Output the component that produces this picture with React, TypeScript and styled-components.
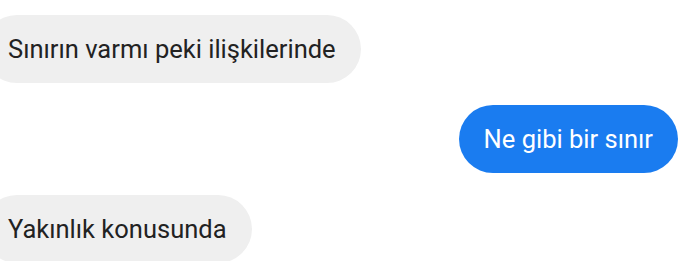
import { createGlobalStyle, styled } from 'styled-components';

const GlobalStyle = createGlobalStyle`
  html, body {
    margin: 0;
    padding: 0;
    background: #ffffff;
    overflow: hidden;
  }
`;

const messages = [
  { id: 1, text: 'Sınırın varmı peki ilişkilerinde', mine: false },
  { id: 2, text: 'Ne gibi bir sınır', mine: true },
  { id: 3, text: 'Yakınlık konusunda', mine: false },
];

const App = () => {
  return (
    <>
      <GlobalStyle />
      <Thread>
        {messages.map((m) => (
          <Row key={m.id} $mine={m.mine}>
            <Bubble $mine={m.mine}>{m.text}</Bubble>
          </Row>
        ))}
      </Thread>
    </>
  );
};

const Thread = styled.div`
  display: flex;
  flex-direction: column;
  gap: 22px;
  width: 690px;
  height: 261px;
  padding: 15px 12px 0 0;
  box-sizing: border-box;
`;

const Row = styled.div<{ $mine: boolean }>`
  display: flex;
  justify-content: ${(p) => (p.$mine ? 'flex-end' : 'flex-start')};
  margin-left: ${(p) => (p.$mine ? '0' : '-17px')};
`;

const Bubble = styled.div<{ $mine: boolean }>`
  height: 68px;
  display: flex;
  align-items: center;
  padding: 0 25px;
  border-radius: 34px;
  background: ${(p) => (p.$mine ? '#1a7cf0' : '#efefef')};
  color: ${(p) => (p.$mine ? '#ffffff' : '#222222')};
  font-family: Roboto, 'Liberation Sans', sans-serif;
  font-size: 25.5px;
  white-space: nowrap;
  box-sizing: border-box;
`;

export default App;
